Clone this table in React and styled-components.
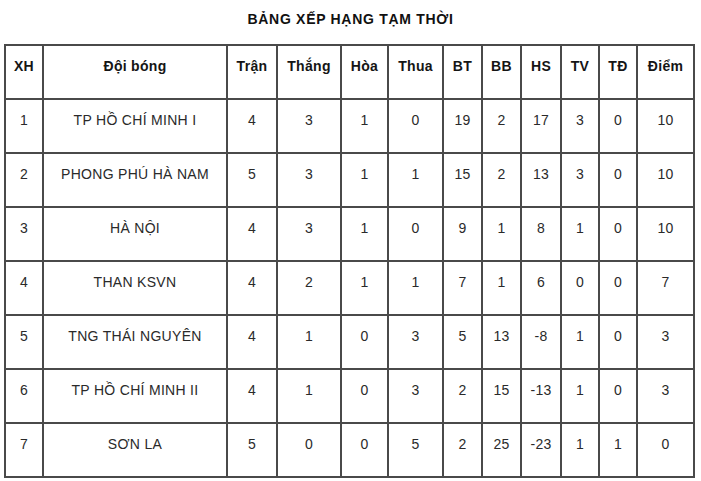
import React from 'react';
import styled, { createGlobalStyle } from 'styled-components';

const GlobalStyle = createGlobalStyle`
  html, body {
    margin: 0;
    padding: 0;
    background: #fff;
  }
  body {
    font-family: 'Liberation Sans', Arial, sans-serif;
  }
`;

const Page = styled.div`
  width: 701px;
  height: 481px;
  overflow: hidden;
  background: #fff;
`;

const Title = styled.h3`
  margin: 0;
  padding: 9px 0 0;
  height: 44px;
  box-sizing: border-box;
  text-align: center;
  font-size: 14px;
  line-height: 20px;
  font-weight: 700;
  letter-spacing: 0.7px;
  color: #111;
`;

const Table = styled.table`
  margin-left: 4px;
  width: 691px;
  table-layout: fixed;
  border-collapse: collapse;
  border: 2px solid #4a4a4a;
`;

const HeadCell = styled.th`
  height: 54px;
  box-sizing: border-box;
  padding: 0 0 12px;
  border: 2px solid #4a4a4a;
  text-align: center;
  vertical-align: middle;
  font-size: 14px;
  font-weight: 700;
  letter-spacing: 0.3px;
  color: #151515;
`;

const Cell = styled.td`
  height: 54px;
  box-sizing: border-box;
  padding: 0 0 12px;
  border: 2px solid #4a4a4a;
  text-align: center;
  vertical-align: middle;
  font-size: 14px;
  letter-spacing: 0.3px;
  color: #2a2a2a;
  white-space: nowrap;
`;

const columns = [
  { label: 'XH', width: 38 },
  { label: 'Đội bóng', width: 184 },
  { label: 'Trận', width: 50 },
  { label: 'Thắng', width: 64 },
  { label: 'Hòa', width: 47 },
  { label: 'Thua', width: 55 },
  { label: 'BT', width: 39 },
  { label: 'BB', width: 39 },
  { label: 'HS', width: 40 },
  { label: 'TV', width: 38 },
  { label: 'TĐ', width: 38 },
  { label: 'Điểm', width: 57 },
];

const rows = [
  ['1', 'TP HỒ CHÍ MINH I', '4', '3', '1', '0', '19', '2', '17', '3', '0', '10'],
  ['2', 'PHONG PHÚ HÀ NAM', '5', '3', '1', '1', '15', '2', '13', '3', '0', '10'],
  ['3', 'HÀ NỘI', '4', '3', '1', '0', '9', '1', '8', '1', '0', '10'],
  ['4', 'THAN KSVN', '4', '2', '1', '1', '7', '1', '6', '0', '0', '7'],
  ['5', 'TNG THÁI NGUYÊN', '4', '1', '0', '3', '5', '13', '-8', '1', '0', '3'],
  ['6', 'TP HỒ CHÍ MINH II', '4', '1', '0', '3', '2', '15', '-13', '1', '0', '3'],
  ['7', 'SƠN LA', '5', '0', '0', '5', '2', '25', '-23', '1', '1', '0'],
];

export default function App() {
  return (
    <Page>
      <GlobalStyle />
      <Title>BẢNG XẾP HẠNG TẠM THỜI</Title>
      <Table>
        <colgroup>
          {columns.map(c => (
            <col key={c.label} style={{ width: c.width }} />
          ))}
        </colgroup>
        <thead>
          <tr>
            {columns.map(c => (
              <HeadCell key={c.label}>{c.label}</HeadCell>
            ))}
          </tr>
        </thead>
        <tbody>
          {rows.map(r => (
            <tr key={r[0]}>
              {r.map((v, i) => (
                <Cell key={i}>{v}</Cell>
              ))}
            </tr>
          ))}
        </tbody>
      </Table>
    </Page>
  );
}
